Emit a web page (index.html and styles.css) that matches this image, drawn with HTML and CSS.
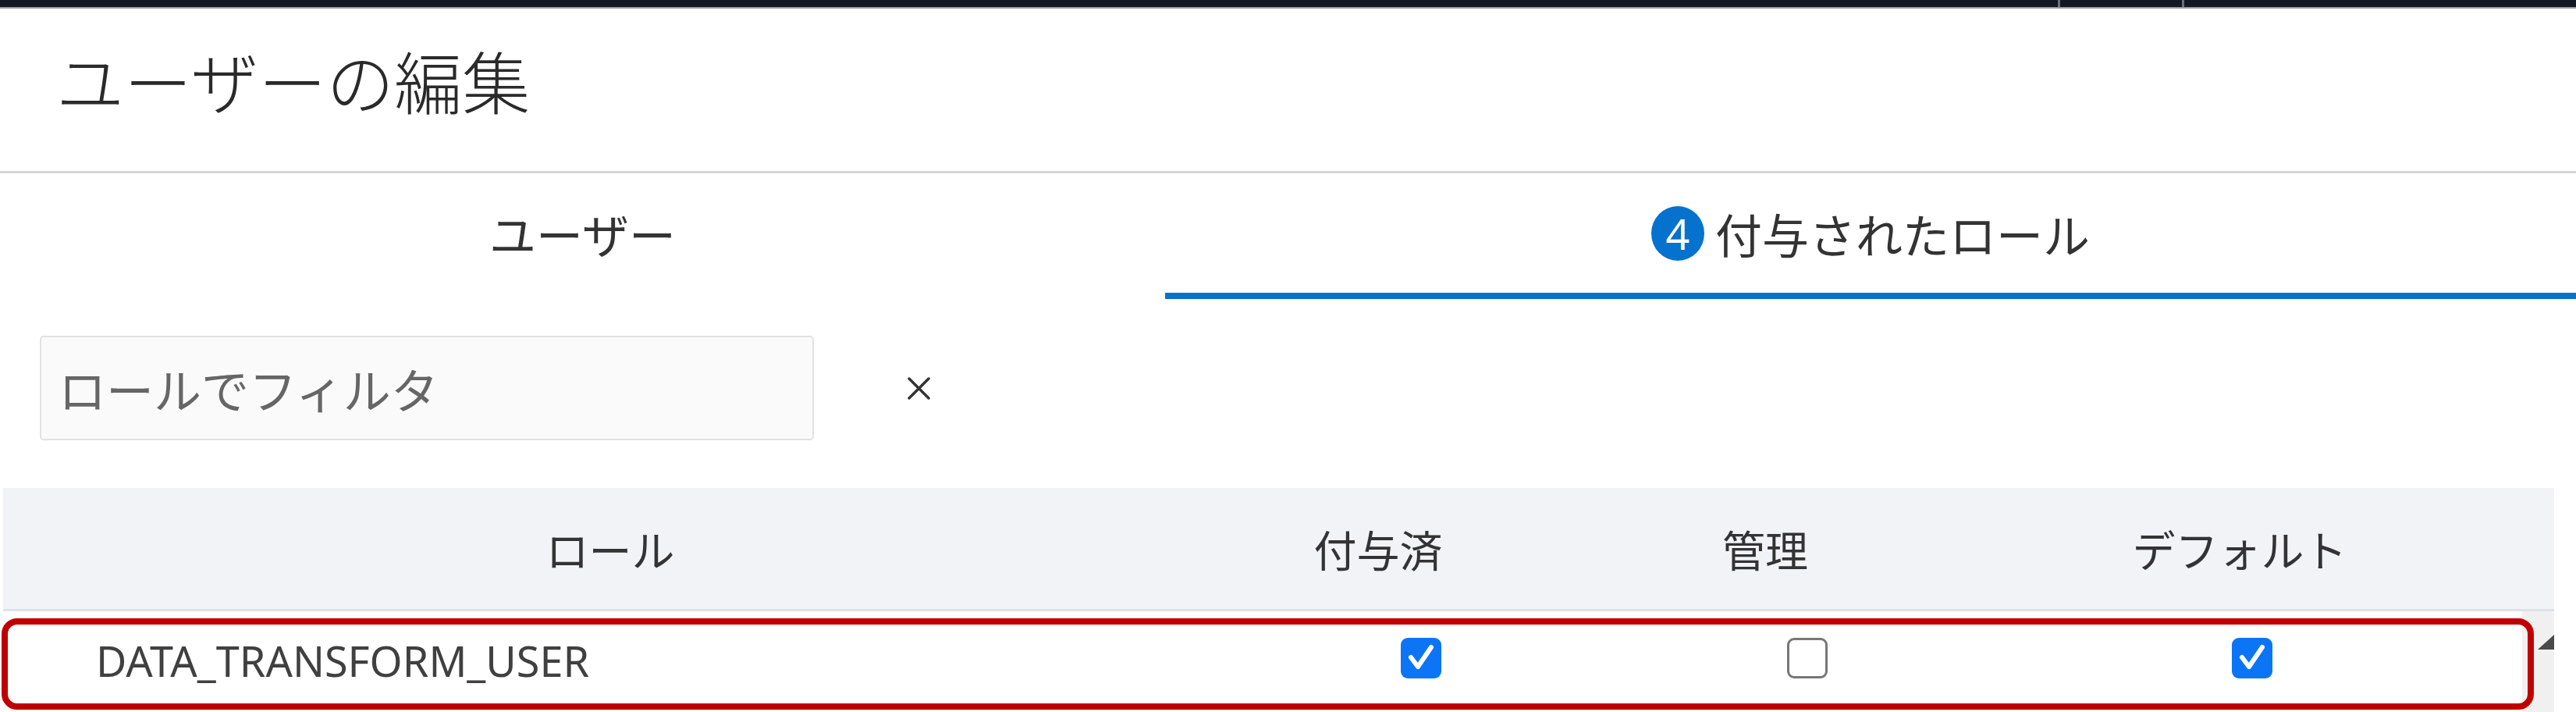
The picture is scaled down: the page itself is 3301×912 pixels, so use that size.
FILE: index.html
```html
<!DOCTYPE html>
<html lang="ja">
<head>
<meta charset="utf-8">
<title>ユーザーの編集</title>
<link rel="stylesheet" href="styles.css">
</head>
<body>
<div class="topbar"><span></span><span class="tb-sep"></span><span></span><span class="tb-sep"></span><span></span></div>
<header class="dlg-head"><h1 class="dlg-title">ユーザーの編集</h1></header>
<nav class="tabs">
  <div class="tab">ユーザー</div>
  <div class="tab tab-active"><span class="badge">4</span><span>付与されたロール</span></div>
</nav>
<div class="filter-row">
  <input class="filter" type="text" placeholder="ロールでフィルタ">
  <button class="clear" type="button" aria-label="クリア"><svg width="33" height="33" viewBox="0 0 33 33"><path d="M4 4 L29 29 M29 4 L4 29" stroke="#333" stroke-width="3.5" stroke-linecap="round"/></svg></button>
</div>
<div class="table">
  <div class="thead">
    <div class="th">ロール</div>
    <div class="th">付与済</div>
    <div class="th">管理</div>
    <div class="th">デフォルト</div>
  </div>
  <div class="tbody">
    <div class="row">
      <div class="td td-name">DATA_TRANSFORM_USER</div>
      <div class="td td-check"><span class="cb cb-on"><svg width="52" height="52" viewBox="0 0 52 52"><path d="M13 25 L22 37 L39 12" fill="none" stroke="#fff" stroke-width="6" stroke-linecap="round" stroke-linejoin="round"/></svg></span></div>
      <div class="td td-check"><span class="cb cb-off"></span></div>
      <div class="td td-check"><span class="cb cb-on"><svg width="52" height="52" viewBox="0 0 52 52"><path d="M13 25 L22 37 L39 12" fill="none" stroke="#fff" stroke-width="6" stroke-linecap="round" stroke-linejoin="round"/></svg></span></div>
    </div>
    <div class="scrollbar"><svg width="41" height="60" viewBox="0 0 41 60"><polygon points="41,30 20,49 41,49" fill="#4a4a4a"/></svg></div>
    <div class="highlight"></div>
  </div>
</div>
</body>
</html>
```

FILE: styles.css
```css
html, body {
  margin: 0;
  padding: 0;
  background: #ffffff;
}

body {
  width: 3301px;
  font-family: "Noto Sans", "Noto Sans CJK JP", sans-serif;
  color: #333333;
  overflow: hidden;
}

.topbar {
  display: grid;
  grid-template-columns: 2637px 3px 156px 3px 1fr;
  height: 9px;
  background: #131922;
  border-bottom: 2px solid #9c9c9c;
}

.tb-sep {
  background: #6c7177;
}

.dlg-head {
  height: 208px;
  border-bottom: 3px solid #d4d4d4;
}

.dlg-title {
  margin: 0;
  padding: 48px 0 0 72px;
  font-family: "Noto Sans CJK JP", sans-serif;
  font-size: 87px;
  line-height: 87px;
  font-weight: 300;
  color: #2a2a2a;
}

.tabs {
  display: grid;
  grid-template-columns: 1493px 1fr;
}

.tab {
  height: 153px;
  display: flex;
  align-items: center;
  justify-content: center;
  font-family: "Noto Sans CJK JP", sans-serif;
  font-size: 60px;
  line-height: 1;
  color: #333333;
  border-bottom: 8px solid transparent;
}

.tab-active {
  border-bottom-color: #0572ce;
}

.badge {
  width: 68px;
  height: 70px;
  border-radius: 50%;
  background: #0572ce;
  color: #ffffff;
  font-family: "Noto Sans", sans-serif;
  font-size: 54px;
  display: flex;
  align-items: center;
  justify-content: center;
  margin-right: 14px;
}

.filter-row {
  display: flex;
  align-items: center;
  padding: 47px 0 0 51px;
}

.filter {
  width: 992px;
  height: 134px;
  box-sizing: border-box;
  border: 2px solid #e2e2e2;
  border-radius: 5px;
  background: #fafafa;
  padding: 0 0 0 22px;
  margin: 0;
  font-family: "Noto Sans CJK JP", sans-serif;
  font-size: 61px;
  color: #333333;
  outline: none;
}

.filter::placeholder {
  color: #666666;
}

.clear {
  margin: 0 0 0 118px;
  width: 33px;
  height: 33px;
  padding: 0;
  border: 0;
  background: none;
  display: flex;
}

.table {
  margin: 61px 0 0 4px;
  width: 3269px;
}

.thead {
  display: grid;
  grid-template-columns: 1556px 412px 580px 636px 1fr;
  height: 155px;
  align-items: center;
  background: #f1f3f6;
  border-bottom: 3px solid #dde2e8;
}

.th {
  text-align: center;
  font-family: "Noto Sans CJK JP", sans-serif;
  font-size: 55px;
  line-height: 1;
  color: #333333;
}

.tbody {
  position: relative;
  display: flex;
}

.row {
  flex: 1;
  display: grid;
  grid-template-columns: 1556px 522px 468px 1fr;
  padding-right: 10px;
  height: 125px;
  align-items: center;
}

.td-name {
  padding-left: 119px;
  font-size: 54px;
  line-height: 1;
  color: #404040;
}

.td-check {
  display: flex;
  justify-content: center;
  padding-bottom: 6px;
}

.cb {
  display: block;
  width: 52px;
  height: 52px;
  border-radius: 9px;
  box-sizing: border-box;
}

.cb svg {
  display: block;
}

.cb-on {
  background: #0b75f5;
}

.cb-off {
  background: #ffffff;
  border: 3px solid #777777;
}

.scrollbar {
  width: 41px;
  height: 130px;
  background: #f0f0f0;
}

.scrollbar svg {
  display: block;
}

.highlight {
  position: absolute;
  left: -2px;
  top: 9px;
  width: 3245px;
  height: 117px;
  box-sizing: border-box;
  border: 8px solid #c00000;
  border-radius: 20px;
  pointer-events: none;
}
```
